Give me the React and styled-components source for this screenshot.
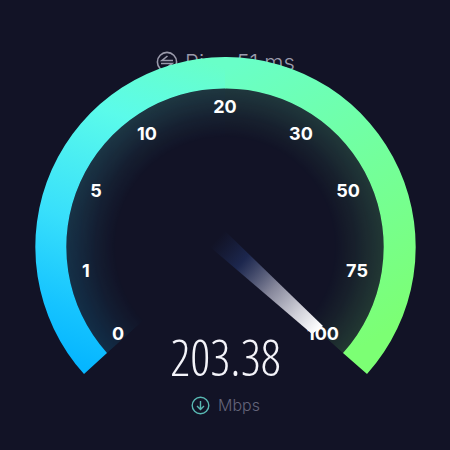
import React from 'react';
import styled, { createGlobalStyle } from 'styled-components'


const marks = [
    { label: '0', x: 118, y: 340 },
    { label: '1', x: 86, y: 277 },
    { label: '5', x: 96, y: 197 },
    { label: '10', x: 147, y: 140 },
    { label: '20', x: 225, y: 113 },
    { label: '30', x: 301, y: 140 },
    { label: '50', x: 348, y: 197 },
    { label: '75', x: 357, y: 277 },
    { label: '100', x: 323, y: 340 },
]

const Dial = () => (
    <DialSvg viewBox="35 57 381 318" role="img" aria-label="Download speed gauge">
        <defs>
            <linearGradient id="left" gradientUnits="userSpaceOnUse" x1="80" y1="365" x2="196" y2="56">
                <stop offset="0" stopColor="#06b6ff"/>
                <stop offset="0.15" stopColor="#16c4ff"/>
                <stop offset="0.4" stopColor="#38dffb"/>
                <stop offset="0.75" stopColor="#5bfbea"/>
                <stop offset="1" stopColor="#69ffc8"/>
            </linearGradient>
            <linearGradient id="right" gradientUnits="userSpaceOnUse" x1="225" y1="70" x2="390" y2="330">
                <stop offset="0" stopColor="#69ffc8"/>
                <stop offset="0.5" stopColor="#73ff9c"/>
                <stop offset="1" stopColor="#7cff74"/>
            </linearGradient>
            <radialGradient id="fade" gradientUnits="userSpaceOnUse" cx="225" cy="247" r="160">
                <stop offset="0.68" stopColor="#fff" stopOpacity="0"/>
                <stop offset="0.8" stopColor="#fff" stopOpacity="0.05"/>
                <stop offset="0.92" stopColor="#fff" stopOpacity="0.12"/>
                <stop offset="1" stopColor="#fff" stopOpacity="0.16"/>
            </radialGradient>
            <linearGradient id="beam" gradientUnits="userSpaceOnUse" x1="217" y1="239" x2="318" y2="330">
                <stop offset="0" stopColor="#1b2850" stopOpacity="0"/>
                <stop offset="0.25" stopColor="#1f2c58" stopOpacity="0.8"/>
                <stop offset="0.55" stopColor="#85869a"/>
                <stop offset="0.8" stopColor="#cfcfd8"/>
                <stop offset="1" stopColor="#fff"/>
            </linearGradient>
            <mask id="glow" maskUnits="userSpaceOnUse" x="35" y="57" width="381" height="318">
                <circle cx="225" cy="247" r="160" fill="url(#fade)"/>
            </mask>
        </defs>
        <g mask="url(#glow)">
            <path d="M225 247L107 353A158.500 158.500 0 0 1 225 88.500Z" fill="url(#left)"/>
            <path d="M225 247L225 88.500A158.500 158.500 0 0 1 343 353Z" fill="url(#right)"/>
        </g>
        <path d="M84 374A190 190 0 0 1 225.500 57V88.500A158.500 158.500 0 0 0 107 353Z" fill="url(#left)"/>
        <path d="M225 57A190 190 0 0 1 367 374L343 353A158.500 158.500 0 0 0 225 88.500Z" fill="url(#right)"/>
        {marks.map(({ label, x, y }) => (
            <Mark key={label} x={x} y={y}>{label}</Mark>
        ))}
        <path d="M209 246L225 231L323 326L312 334Z" fill="url(#beam)"/>
    </DialSvg>
)

const App = () => {
    return (
        <>
            <GlobalStyle/>
            <Page>
                <Ping>
                    <svg width="22" height="22" viewBox="0 0 22 22" fill="none" stroke="currentColor" strokeWidth="1.600">
                        <circle cx="11" cy="11" r="9.600"/>
                        <path d="M17 9.500H6L11.500 5M5 12.500H16L10.500 17"/>
                    </svg>
                    <span>Ping 51 ms</span>
                </Ping>
                <Dial/>
                <Speed>203.38</Speed>
                <Unit>
                    <svg width="19" height="19" viewBox="0 0 19 19" fill="none" stroke="#58b8b2" strokeWidth="1.400">
                        <circle cx="9.500" cy="9.500" r="8.300"/>
                        <path d="M9.500 5V13.500M6 10L9.500 13.500L13 10"/>
                    </svg>
                    <span>Mbps</span>
                </Unit>
            </Page>
        </>
    );
};

export default App;


const GlobalStyle = createGlobalStyle`
  body {
    margin: 0;
    background: #121326;
    font-family: Inter, "Liberation Sans", sans-serif;
  }
`

const Page = styled.main`
  display: flex;
  flex-direction: column;
  align-items: center;
  min-height: 100vh;
  box-sizing: border-box;
  padding: 48px 34px 32px 35px;
`

const Ping = styled.div`
  display: flex;
  align-items: center;
  gap: 7px;
  height: 28px;
  margin-bottom: -19px;
  color: #9a9aab;
  font-size: 22px;
  font-weight: 300;
  line-height: 28px;
`

const DialSvg = styled.svg`
  display: block;
  width: 100%;
  max-width: 560px;
`

const Mark = styled.text`
  fill: #fff;
  font-size: 18px;
  font-weight: 700;
  text-anchor: middle;
`

const Speed = styled.div`
  margin-top: -44px;
  color: #f4f4fa;
  font-family: "Open Sans Condensed Light", "Open Sans Light Condensed", "Noto Sans ExtraCondensed Thin", "Noto Sans ExtraCondensed Light", "Roboto Condensed", sans-serif;
  font-size: 50px;
  font-weight: 100;
  line-height: 52px;
`

const Unit = styled.div`
  display: flex;
  align-items: center;
  gap: 8px;
  margin-top: 12px;
  color: #64647a;
  font-size: 16px;
  font-weight: 300;
  line-height: 20px;
`
